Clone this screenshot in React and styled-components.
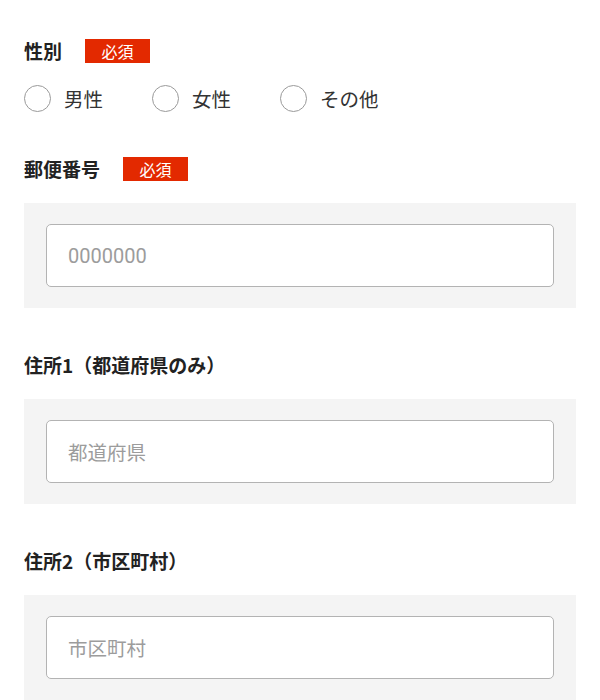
import React, { useState } from "react";
import styled, { createGlobalStyle } from "styled-components";

const GlobalStyle = createGlobalStyle`
body {
  margin: 0;
  background: #fff;
  font-family: "Noto Sans CJK JP", "Noto Sans", sans-serif;
  color: #222;
}
`;

const Form = styled.form`
display: flex;
flex-direction: column;
padding: 39px 24px 0;
`;

const Field = styled.div`
display: flex;
flex-direction: column;
margin-bottom: 45px;
`;

const LabelRow = styled.div`
display: flex;
align-items: center;
gap: 23px;
min-height: 24px;
margin-bottom: 22px;
`;

const Label = styled.label`
font-size: 19px;
font-weight: 700;
line-height: 24px;
color: #222;
`;

const Required = styled.span`
display: inline-flex;
align-items: center;
justify-content: center;
width: 65px;
height: 24px;
background-color: #e32900;
color: #fff;
font-size: 16px;
line-height: 1;
`;

const RadioGroup = styled.div`
display: flex;
align-items: center;
gap: 49px;
height: 27px;
`;

const RadioLabel = styled.label`
display: flex;
align-items: center;
gap: 13px;
font-size: 19.5px;
line-height: 27px;
color: #333;
cursor: pointer;
`;

const RadioCircle = styled.span`
box-sizing: border-box;
width: 27px;
height: 27px;
border-radius: 50%;
border: 1.5px solid #9a9a9a;
background: #fff;
display: flex;
align-items: center;
justify-content: center;
&::after {
  content: "";
  width: 13px;
  height: 13px;
  border-radius: 50%;
  background: ${({ checked }) => (checked ? "#e32900" : "transparent")};
}
`;

const HiddenRadio = styled.input`
display: none;
`;

const Panel = styled.div`
background-color: #f4f4f4;
padding: 21px 22px;
`;

const Input = styled.input`
box-sizing: border-box;
width: 100%;
height: 63px;
border: 1.5px solid #b3b3b3;
border-radius: 5px;
background: #fff;
padding: 0 21px;
font-family: Roboto, "Noto Sans CJK JP", sans-serif;
font-size: 20px;
color: #222;
outline: none;
&::placeholder {
  color: #9c9c9c;
}
`;

const CjkInput = styled(Input)`
font-family: "Noto Sans CJK JP", sans-serif;
font-size: 19.5px;
`;

const genders = ["男性", "女性", "その他"];

const App = () => {
  const [gender, setGender] = useState("");
  const [zip, setZip] = useState("");
  const [pref, setPref] = useState("");
  const [city, setCity] = useState("");

  return (
    <>
      <GlobalStyle />
      <Form onSubmit={e => e.preventDefault()}>
        <Field>
          <LabelRow>
            <Label>性別</Label>
            <Required>必須</Required>
          </LabelRow>
          <RadioGroup>
            {genders.map(g => (
              <RadioLabel key={g}>
                <HiddenRadio type="radio" name="gender" value={g} checked={gender === g} onChange={() => setGender(g)} />
                <RadioCircle checked={gender === g} />
                {g}
              </RadioLabel>
            ))}
          </RadioGroup>
        </Field>

        <Field>
          <LabelRow>
            <Label>郵便番号</Label>
            <Required>必須</Required>
          </LabelRow>
          <Panel>
            <Input type="text" placeholder="0000000" value={zip} onChange={e => setZip(e.target.value)} />
          </Panel>
        </Field>

        <Field>
          <LabelRow>
            <Label>住所1（都道府県のみ）</Label>
          </LabelRow>
          <Panel>
            <CjkInput type="text" placeholder="都道府県" value={pref} onChange={e => setPref(e.target.value)} />
          </Panel>
        </Field>

        <Field>
          <LabelRow>
            <Label>住所2（市区町村）</Label>
          </LabelRow>
          <Panel>
            <CjkInput type="text" placeholder="市区町村" value={city} onChange={e => setCity(e.target.value)} />
          </Panel>
        </Field>
      </Form>
    </>
  );
};

export default App;
